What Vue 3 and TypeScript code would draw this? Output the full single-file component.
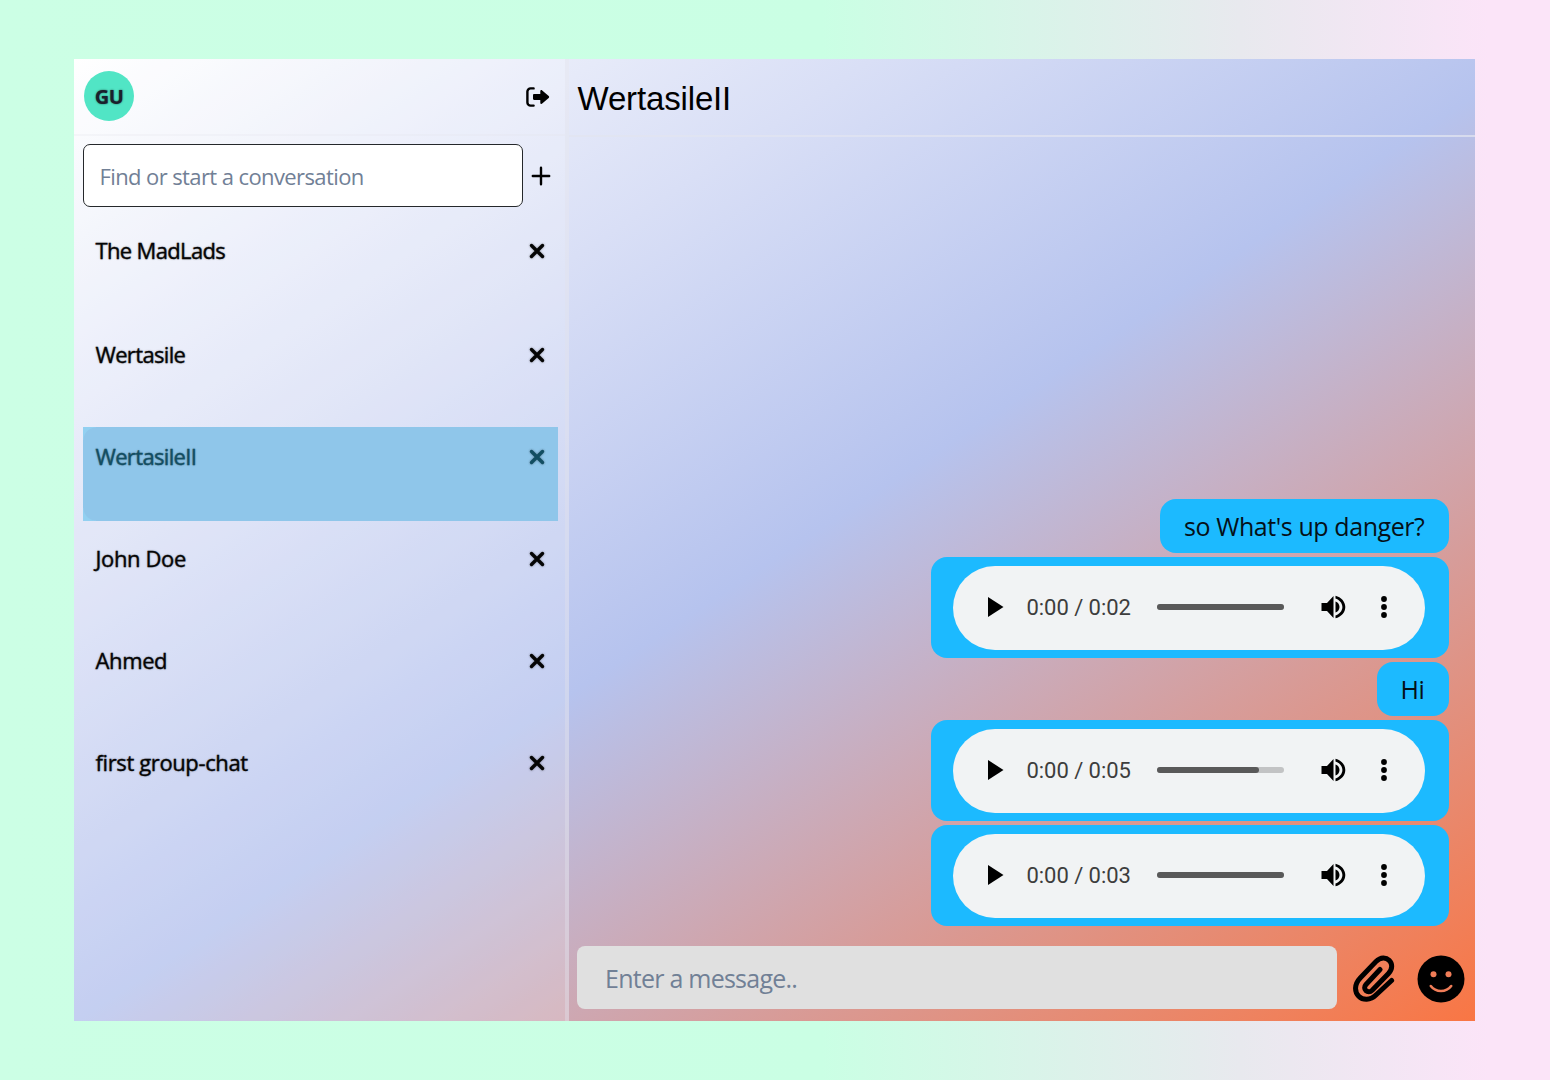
<script setup lang="ts">
import { ref } from 'vue'

interface Chat {
  name: string
  height: number
  active?: boolean
}

interface Message {
  text?: string
  duration?: string
  buffered?: number
}

const chats: Chat[] = [
  { name: 'The MadLads', height: 104 },
  { name: 'Wertasile', height: 102 },
  { name: 'WertasileII', height: 94, active: true },
  { name: 'John Doe', height: 102 },
  { name: 'Ahmed', height: 102 },
  { name: 'first group-chat', height: 102 },
]

const messages: Message[] = [
  { text: "so What's up danger?" },
  { duration: '0:02', buffered: 100 },
  { text: 'Hi' },
  { duration: '0:05', buffered: 81 },
  { duration: '0:03', buffered: 100 },
]

const search = ref('')
const draft = ref('')
</script>

<template>
  <div class="page">
    <main class="app">
      <aside class="sidebar">
        <header class="side-head">
          <div class="avatar">GU</div>
          <svg class="logout" viewBox="0 0 24 20">
            <path d="M7.600 1.400H4.600A3.200 3.200 0 0 0 1.400 4.600v10.800A3.200 3.200 0 0 0 4.600 18.600h3" fill="none" stroke="#000" stroke-width="2.400" stroke-linecap="round" />
            <path d="M8.200 7h6.100V4.300c0-1.100 1.100-1.600 1.900-.9l6.500 5.700c.6.5.6 1.300 0 1.800l-6.500 5.700c-.8.7-1.900.2-1.900-.9V13H8.200c-.7 0-1.200-.5-1.200-1.200V8.200C7 7.500 7.500 7 8.200 7z" />
          </svg>
        </header>
        <div class="search-row">
          <input v-model="search" class="search" placeholder="Find or start a conversation" />
          <svg class="plus" viewBox="0 0 20 20">
            <path d="M10 1.800v16.400M1.800 10h16.400" stroke="#000" stroke-width="2.400" stroke-linecap="round" />
          </svg>
        </div>
        <ul class="chats">
          <li v-for="chat in chats" :key="chat.name" class="chat" :class="{ active: chat.active }" :style="{ height: chat.height + 'px' }">
            <span class="chat-name">{{ chat.name }}</span>
            <svg class="close" viewBox="0 0 16 16">
              <path d="M2.500 2.500l11 11M13.500 2.500l-11 11" stroke="currentColor" stroke-width="3.400" stroke-linecap="round" />
            </svg>
          </li>
        </ul>
      </aside>

      <section class="room">
        <header class="room-head">WertasileII</header>
        <div class="messages">
          <div v-for="(m, i) in messages" :key="i" class="bubble" :class="{ voice: m.duration }">
            <template v-if="m.text">{{ m.text }}</template>
            <div v-else class="player">
              <svg class="play" viewBox="0 0 16 20"><path d="M0 0l15.500 10L0 20z" /></svg>
              <span class="time">0:00 / {{ m.duration }}</span>
              <div class="track"><div class="buffer" :style="{ width: m.buffered + '%' }"></div></div>
              <svg class="volume" viewBox="0 0 24 24">
                <path d="M0 8v8h5.500L12 23V1L5.500 8z" />
                <path d="M14 6.500v11c2.300-.8 4-3 4-5.500s-1.700-4.700-4-5.500z" />
                <path d="M14 .7v2.800c3.700 1.200 6.900 4.500 6.900 8.500s-3.200 7.300-6.900 8.500v2.800c5.500-1.300 9.800-5.800 9.800-11.300S19.500 2 14 .7z" />
              </svg>
              <svg class="more" viewBox="0 0 6 22">
                <circle cx="3" cy="3" r="2.900" /><circle cx="3" cy="11" r="2.900" /><circle cx="3" cy="19" r="2.900" />
              </svg>
            </div>
          </div>
        </div>
        <footer class="composer">
          <input v-model="draft" class="draft" placeholder="Enter a message.." />
          <svg class="clip" viewBox="0 0 42 48">
            <path d="M27 14.500L13 29.500c-4 4.600 1.800 10 6.200 5.800L35.500 18.500C44.500 9 32.500-3 23 6.600L7.200 23C-5.500 36.500 10.500 52.500 23.500 39.500L38.600 25.500" fill="none" stroke="#000" stroke-width="5" stroke-linecap="round" stroke-linejoin="round" />
          </svg>
          <svg class="smile" viewBox="0 0 48 48">
            <circle cx="24" cy="24" r="23.500" />
            <circle cx="16.500" cy="19.300" r="3" fill="#f07d58" />
            <circle cx="31.500" cy="19.300" r="3" fill="#f07d58" />
            <path d="M13.800 31c5 6.600 15.400 6.600 20.400 0" fill="none" stroke="#f07d58" stroke-width="2.600" stroke-linecap="round" />
          </svg>
        </footer>
      </section>
    </main>
  </div>
</template>

<style>
body {
  margin: 0;
}
</style>

<style scoped>
* {
  box-sizing: border-box;
}
.page {
  width: 1550px;
  height: 1080px;
  padding: 59px 75px 59px 74px;
  background: linear-gradient(90deg, #ccffe5 0%, #caffe4 53%, #e8e9ee 80%, #fbe4f8 96%);
  font-family: 'Open Sans', 'Noto Sans', sans-serif;
  overflow: hidden;
}
.app {
  display: flex;
  width: 1401px;
  height: 962px;
  background: linear-gradient(146.500deg, #fff 0%, #d9dff6 28%, #b6c3ee 51%, #d79c99 75%, #f97644 100%);
}
.sidebar {
  width: 495px;
  background: rgba(255, 255, 255, 0.2);
  border-right: 4px solid rgba(226, 226, 236, 0.4);
}
.side-head {
  display: flex;
  align-items: center;
  justify-content: space-between;
  height: 77px;
  padding: 0 15px 2px 10px;
  border-bottom: 2px solid rgba(226, 226, 236, 0.25);
}
.avatar {
  width: 50px;
  height: 50px;
  border-radius: 50%;
  background: #51e5c5;
  color: #1a202c;
  font: 700 20px/51px 'Open Sans', sans-serif;
  letter-spacing: -0.5px;
  text-align: center;
  text-shadow: 0 0 2px rgba(0, 0, 0, 0.6);
}
.logout {
  width: 24px;
  height: 20px;
  margin-top: 3px;
}
.search-row {
  display: flex;
  align-items: center;
  gap: 8px;
  height: 79px;
  padding: 0 0 0 8.500px;
}
.search {
  width: 440px;
  height: 63px;
  margin-bottom: 1px;
  padding: 2px 16px 0;
  border: 1.500px solid #25282b;
  border-radius: 7px;
  background: #fff;
  font: 22px 'Open Sans', sans-serif;
  letter-spacing: -0.6px;
  outline: none;
}
.search::placeholder,
.draft::placeholder {
  color: #718096;
  opacity: 1;
}
.plus {
  width: 20px;
  height: 20px;
  margin-top: 1px;
}
.chats {
  list-style: none;
  margin: 0;
  padding: 6px 7px 0 9px;
}
.chat {
  display: flex;
  justify-content: space-between;
  align-items: flex-start;
  padding: 14px 13px 0 12.500px;
  color: #050505;
}
.chat-name {
  font-size: 22px;
  line-height: 30px;
  letter-spacing: -0.65px;
  -webkit-text-stroke: 0.3px currentColor;
  text-shadow: 0 0 2px rgba(0, 0, 0, 0.45);
}
.chat:nth-child(n + 4) .chat-name {
  letter-spacing: -0.38px;
}
.close {
  width: 16px;
  height: 16px;
  margin-top: 8px;
  filter: drop-shadow(0 0 1px rgba(0, 0, 0, 0.4));
}
.chat.active {
  margin-bottom: 8px;
  background: radial-gradient(circle at 100% 100%, #8fc6ea 12px, #92d0f1 13px) 0 0 / 13px 13px no-repeat,
    radial-gradient(circle at 100% 0, #8fc6ea 12px, #92d0f1 13px) 0 100% / 13px 13px no-repeat,
    #8fc6ea;
  color: #124e62;
}
.room {
  display: flex;
  flex-direction: column;
  flex: 1;
}
.room-head {
  height: 78px;
  padding: 0 8px 0 8.500px;
  border-bottom: 2px solid rgba(226, 228, 240, 0.75);
  font: 33px/79px 'Liberation Sans', sans-serif;
  letter-spacing: -0.15px;
  color: #000;
}
.messages {
  display: flex;
  flex: 1;
  flex-direction: column;
  align-items: flex-end;
  justify-content: flex-end;
  gap: 4.300px;
  padding: 0 26.500px 20.500px 0;
}
.bubble {
  height: 54px;
  padding: 0 24px;
  border-radius: 16px;
  background: #1cbaff;
  color: #051018;
  font-size: 25px;
  line-height: 55px;
  letter-spacing: -0.42px;
}
.bubble.voice {
  width: 518px;
  height: 100.500px;
  padding: 8.500px 24px 0 22px;
}
.player {
  display: flex;
  align-items: center;
  height: 84.500px;
  padding: 0 38px 1px 35px;
  border-radius: 43px;
  background: #f1f3f4;
}
.play {
  width: 16px;
  height: 20px;
}
.time {
  width: 130px;
  margin-left: 23px;
  padding-top: 2px;
  font: 22px/26px Roboto, 'Liberation Sans', sans-serif;
  letter-spacing: -0.05px;
  color: #3d3d3d;
  white-space: nowrap;
}
.track {
  width: 127px;
  height: 6px;
  border-radius: 3px;
  background: #c2c3c4;
}
.buffer {
  height: 6px;
  border-radius: 3px;
  background: #595959;
}
.volume {
  width: 25px;
  height: 24px;
  margin-left: 37px;
}
.more {
  width: 6px;
  height: 22px;
  margin-left: auto;
}
.composer {
  display: flex;
  align-items: center;
  height: 75px;
  padding: 0 10px 11px 8px;
}
.draft {
  width: 760px;
  height: 63px;
  margin-bottom: 1px;
  padding: 1px 28px 0;
  border: 0;
  border-radius: 8px;
  background: #e0e0e0;
  font: 25px 'Open Sans', sans-serif;
  letter-spacing: -0.75px;
  outline: none;
}
.clip {
  width: 42px;
  height: 48px;
  margin: 1px 0 0 16px;
}
.smile {
  width: 48px;
  height: 48px;
  margin: 1px 0 0 auto;
}
</style>
